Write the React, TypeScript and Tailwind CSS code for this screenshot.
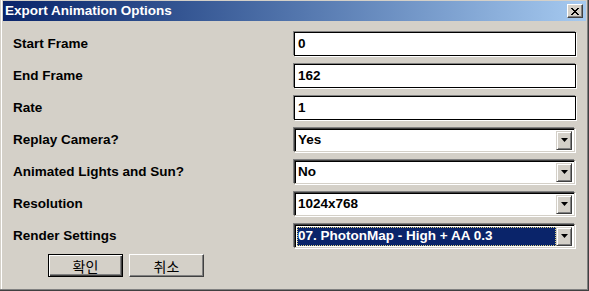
import React from "react";

const font = { fontFamily: '"Liberation Sans", Arial, sans-serif' };

function Input({ value }: { value: string }) {
  return (
    <div className="w-[282px] h-[24px] bg-white border border-black shadow-[-1px_-1px_0_#808080,1px_1px_0_#ffffff] flex items-center pl-[3px] text-[13.5px] font-bold text-black">
      {value}
    </div>
  );
}

function Arrow() {
  return (
    <div className="w-[16px] h-[19px] bg-[#d4d0c8] border border-t-[#d4d0c8] border-l-[#d4d0c8] border-r-[#404040] border-b-[#404040] shadow-[inset_1px_1px_0_#ffffff,inset_-1px_-1px_0_#808080] flex items-center justify-center">
      <svg width="7" height="4" viewBox="0 0 7 4">
        <polygon points="0,0 7,0 3.5,4" fill="#000" />
      </svg>
    </div>
  );
}

function Select({ value, selected }: { value: string; selected?: boolean }) {
  return (
    <div className="w-[281px] h-[24px] bg-white border border-t-[#404040] border-l-[#404040] border-r-[#d4d0c8] border-b-[#d4d0c8] shadow-[inset_1px_1px_0_#000,1px_1px_0_#ffffff,-1px_-1px_0_#808080] flex items-center pl-[2px] pr-[2px]">
      <div
        className={
          "flex-1 h-[19px] flex items-center pl-[1px] text-[13.5px] font-bold " +
          (selected
            ? "bg-[#0a246a] text-white outline outline-1 outline-dotted outline-[#d8d080] -outline-offset-1"
            : "text-black")
        }
      >
        {value}
      </div>
      <Arrow />
    </div>
  );
}

function Row({ label, children }: { label: string; children: React.ReactNode }) {
  return (
    <div className="flex items-center h-[24px]">
      <div className="w-[291px] pl-[10px] text-[13.5px] font-bold text-black">{label}</div>
      {children}
    </div>
  );
}

export default function App() {
  return (
    <div
      style={font}
      className="w-[589px] h-[291px] bg-[#d4d0c8] pt-[1px] px-[3px] pb-[3px] shadow-[inset_-1px_-1px_0_#404040,inset_-2px_-2px_0_#808080,inset_1px_0_0_#d4d0c8,inset_2px_0_0_#ffffff] flex flex-col"
    >
      <div className="h-[20px] w-full bg-gradient-to-r from-[#0a246a] to-[#a6caf0] flex items-center justify-between pl-[2px]">
        <span className="text-white font-bold text-[13.5px] leading-none">Export Animation Options</span>
        <div className="w-[16px] h-[14px] mr-[3px] bg-[#d4d0c8] border border-t-[#ffffff] border-l-[#ffffff] border-r-[#404040] border-b-[#404040] shadow-[inset_-1px_-1px_0_#808080] flex items-center justify-center">
          <svg width="8" height="7" viewBox="0 0 8 7" shapeRendering="crispEdges">
            <path d="M0 0h2v1h-2zM6 0h2v1h-2zM1 1h2v1h-2zM5 1h2v1h-2zM2 2h4v1h-4zM3 3h2v1h-2zM2 4h4v1h-4zM1 5h2v1h-2zM5 5h2v1h-2zM0 6h2v1h-2zM6 6h2v1h-2z" fill="#000" />
          </svg>
        </div>
      </div>
      <div className="flex flex-col gap-[8px] pt-[11px]">
        <Row label="Start Frame"><Input value="0" /></Row>
        <Row label="End Frame"><Input value="162" /></Row>
        <Row label="Rate"><Input value="1" /></Row>
        <Row label="Replay Camera?"><Select value="Yes" /></Row>
        <Row label="Animated Lights and Sun?"><Select value="No" /></Row>
        <Row label="Resolution"><Select value="1024x768" /></Row>
        <Row label="Render Settings"><Select value="07. PhotonMap - High + AA 0.3" selected /></Row>
      </div>
      <div
        className="flex gap-[6px] pl-[45px] mt-[6px]"
        style={{ fontFamily: '"Noto Sans CJK KR", "Liberation Sans", sans-serif' }}
      >
        <div className="w-[75px] h-[23px] border border-black bg-[#d4d0c8] shadow-[inset_1px_1px_0_#ffffff,inset_-1px_-1px_0_#404040,inset_-2px_-2px_0_#808080] flex items-center justify-center text-[14px] leading-none text-black">
          확인
        </div>
        <div className="w-[75px] h-[23px] bg-[#d4d0c8] border border-t-[#ffffff] border-l-[#ffffff] border-r-[#404040] border-b-[#404040] shadow-[inset_-1px_-1px_0_#808080] flex items-center justify-center text-[14px] leading-none text-black">
          취소
        </div>
      </div>
    </div>
  );
}
